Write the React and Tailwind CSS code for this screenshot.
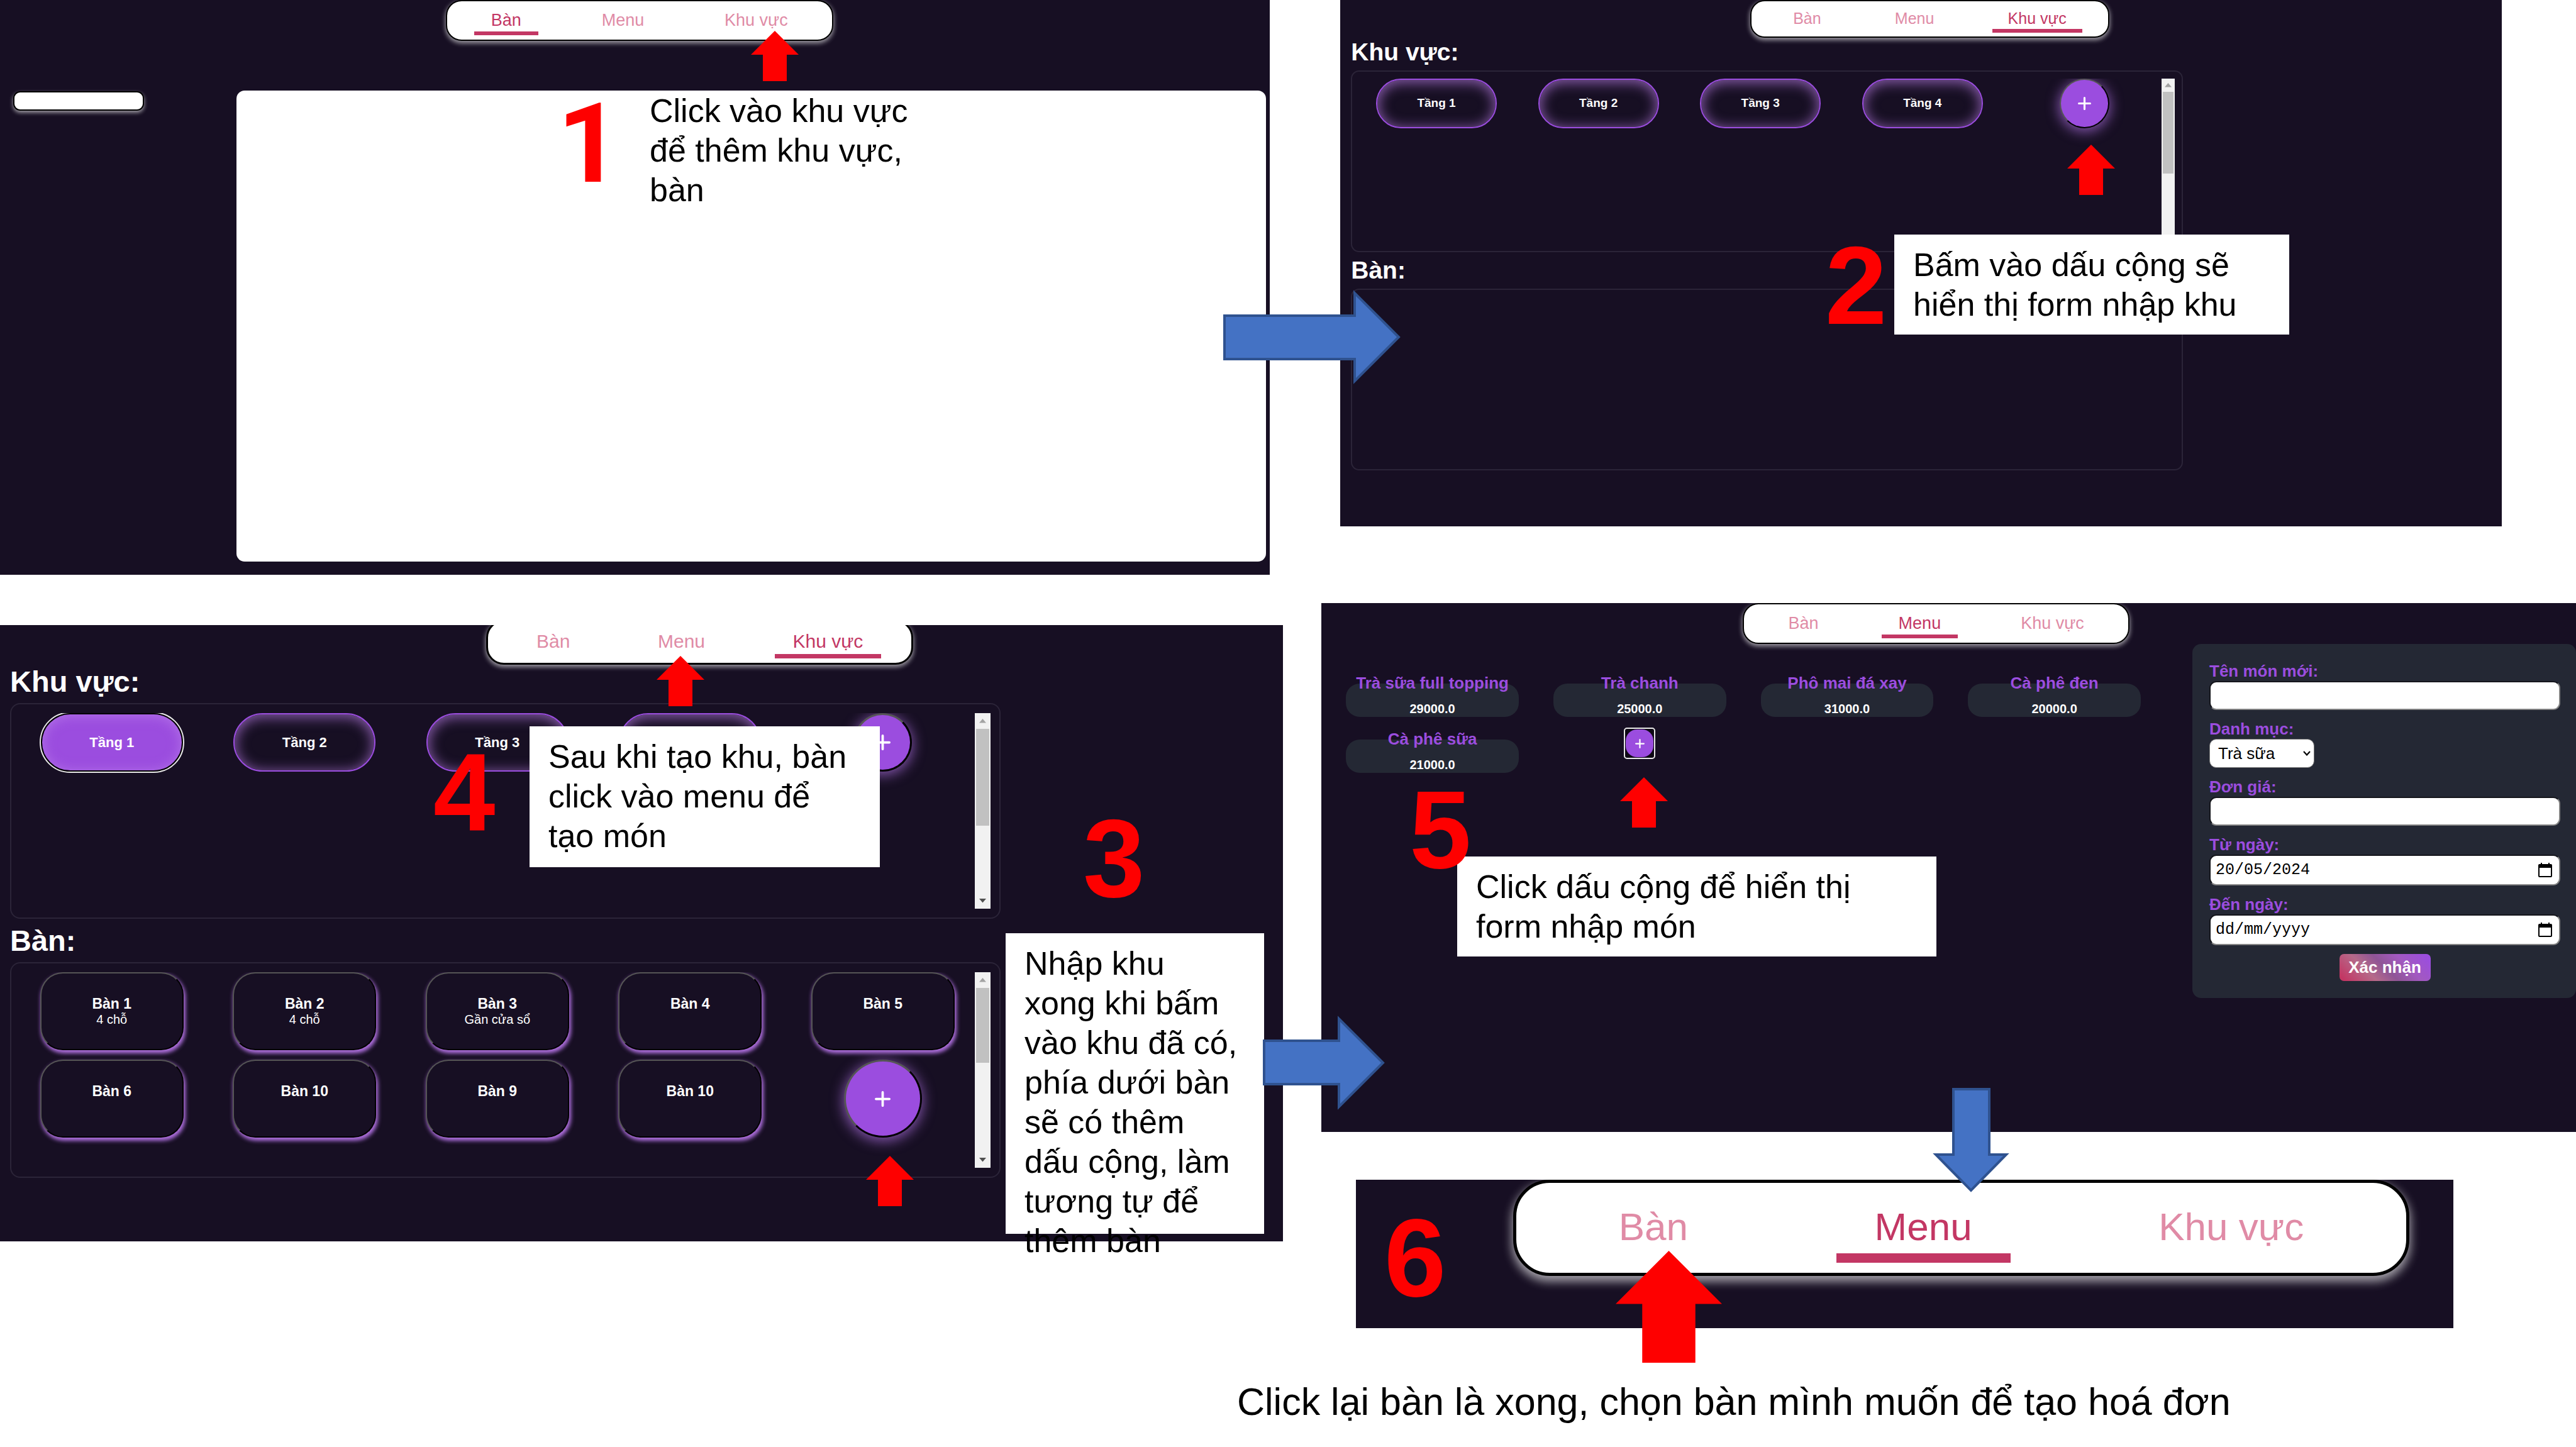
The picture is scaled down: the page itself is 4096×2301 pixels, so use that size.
import React from "react";

const TABS = ["Bàn", "Menu", "Khu vực"];

const NAV_SIZES = {
  sm: {
    bar: "h-[60px] rounded-[23px] border-[2px] px-[41px] pb-[6px] shadow-[0_3px_7px_1px_rgba(255,255,255,0.55)]",
    item: "text-[25px] leading-[30px] px-[25px] pb-[2px] border-b-[6px]",
  },
  md: {
    bar: "h-[65px] rounded-[25px] border-[2px] px-[43px] pb-[7px] shadow-[0_3px_7px_1px_rgba(255,255,255,0.55)]",
    item: "text-[27px] leading-[32px] px-[27px] pb-[2px] border-b-[6px]",
  },
  lg: {
    bar: "-mt-2 h-[71px] rounded-[28px] border-[3px] px-[48px] pb-[7px] shadow-[0_3px_7px_1px_rgba(255,255,255,0.55)]",
    item: "text-[30px] leading-[36px] px-[29px] pb-[2px] border-b-[7px]",
  },
  xl: {
    bar: "h-[153px] rounded-[58px] border-[5px] px-[102px] pb-[16px] shadow-[0_7px_15px_2px_rgba(255,255,255,0.6)]",
    item: "text-[62px] leading-[72px] px-[61px] pb-[6px] border-b-[15px]",
  },
};

function TabBar({ size, active, width }) {
  const s = NAV_SIZES[size];
  return (
    <nav className={`flex items-end justify-between border-black bg-white ${s.bar} ${width}`}>
      {TABS.map((tab) => (
        <button
          key={tab}
          type="button"
          className={`whitespace-nowrap ${s.item} ${
            tab === active ? "border-[#c33764] text-[#c33764]" : "border-transparent text-[#e08ba6]"
          }`}
        >
          {tab}
        </button>
      ))}
    </nav>
  );
}

function Plus({ className }) {
  return (
    <svg viewBox="0 0 20 20" className={className} fill="none" stroke="white" strokeWidth="3" strokeLinecap="round">
      <path d="M10 1.5V18.5M1.5 10H18.5" />
    </svg>
  );
}

function ScrollBar({ size, thumb }) {
  const lg = size === "lg";
  return (
    <div className={`flex shrink-0 flex-col items-center bg-[#f1f1f1] ${lg ? "w-[25px]" : "w-[21px]"}`}>
      <div className={`flex items-center justify-center ${lg ? "h-[25px]" : "h-[21px]"}`}>
        <svg viewBox="0 0 12 7" className="w-[11px]" fill="#a3a3a3">
          <path d="M0 7L6 0L12 7Z" />
        </svg>
      </div>
      <div className={`bg-[#c1c1c1] ${lg ? "w-[21px]" : "w-[17px]"} ${thumb}`} />
      <div className={`mt-auto flex items-center justify-center ${lg ? "h-[25px]" : "h-[21px]"}`}>
        <svg viewBox="0 0 12 7" className="w-[11px]" fill="#505050">
          <path d="M0 0L6 7L12 0Z" />
        </svg>
      </div>
    </div>
  );
}

const BEVEL = "border-t-[#555] border-l-[#555] border-r-black border-b-black";

const GROUP_SIZES = {
  sm: {
    title: "text-[39px] leading-[58px]",
    box: "h-[289px] rounded-[13px] border-[2px] p-[11px]",
    grid: "gap-x-[12px] gap-y-[12px]",
    area: "h-[79px] w-[192px] rounded-[40px] border-[2px] text-[19px]",
    round: "size-[79px] border-[2px]",
    plus: "size-[21px]",
  },
  lg: {
    title: "text-[47px] leading-[69px]",
    box: "h-[343px] rounded-[16px] border-[2px] p-[14px]",
    grid: "gap-x-[15px] gap-y-[15px]",
    area: "h-[93px] w-[226px] rounded-[47px] border-[2px] text-[22px]",
    round: "size-[93px] border-[3px]",
    plus: "size-[25px]",
  },
};

function Group({ title, size, width, thumb, children }) {
  const s = GROUP_SIZES[size];
  return (
    <section className={width}>
      <h2 className={`font-bold text-white ${s.title}`}>{title}</h2>
      <div className={`flex border-[#2b2438] ${s.box}`}>
        {children && (
          <>
            <div className={`grid flex-1 grid-cols-5 content-start justify-items-center overflow-hidden ${s.grid}`}>
              {children}
            </div>
            <ScrollBar size={size} thumb={thumb} />
          </>
        )}
      </div>
    </section>
  );
}

function AreaButton({ size, selected, children }) {
  return (
    <button
      type="button"
      className={`font-bold text-white ${GROUP_SIZES[size].area} ${
        selected
          ? "border-black bg-[#9b4ddf] shadow-[inset_0_2px_20px_rgba(190,130,235,0.7)] outline-2 outline-[#e8e8e8]"
          : "border-[#9b4ddf] shadow-[inset_0_3px_20px_2px_rgba(170,115,210,0.75)]"
      }`}
    >
      {children}
    </button>
  );
}

function AddButton({ size, round }) {
  const s = GROUP_SIZES[size];
  return (
    <button
      type="button"
      aria-label="Thêm"
      className={`flex items-center justify-center rounded-full bg-[#9b4ddf] shadow-[0_4px_20px_2px_rgba(170,110,220,0.7)] ${BEVEL} ${
        round || s.round
      }`}
    >
      <Plus className={s.plus} />
    </button>
  );
}

function TableButton({ name, note }) {
  return (
    <button
      type="button"
      className={`flex h-[124px] w-[228px] flex-col items-center justify-center rounded-[36px] border-[2px] bg-[#170f23] text-white shadow-[2px_4px_6px_1px_#b070e0] ${BEVEL}`}
    >
      <span className="text-[23px] leading-[26px] font-bold">{name}</span>
      <span className="h-[24px] text-[20px] leading-[24px]">{note}</span>
    </button>
  );
}

function Dish({ name, price }) {
  return (
    <li className="flex h-[53px] flex-col items-center rounded-[22px] bg-[#242834]">
      <span className="-mt-4 text-[26px] leading-[30px] font-bold whitespace-nowrap text-[#9b4ddf]">{name}</span>
      <span className="mt-[14px] text-[20px] leading-[24px] font-bold text-white">{price}</span>
    </li>
  );
}

const FIELD =
  "rounded-[11px] border-[2px] border-t-[#15161c] border-l-[#15161c] border-r-[#858585] border-b-[#858585] bg-white px-[8px] text-black";

function Label({ htmlFor, children }) {
  return (
    <label htmlFor={htmlFor} className="mt-[14px] text-[26px] leading-[32px] font-bold text-[#9b4ddf]">
      {children}
    </label>
  );
}

function DateField({ id, value }) {
  return (
    <div className={`flex h-[49px] items-center justify-between pr-[11px] ${FIELD}`}>
      <input
        id={id}
        type="text"
        defaultValue={value}
        placeholder="dd/mm/yyyy"
        className="min-w-0 flex-1 font-['Liberation_Mono',monospace] text-[25px] outline-none placeholder:text-black"
      />
      <button type="button" aria-label="Chọn ngày">
        <svg viewBox="0 0 22 24" className="h-[24px] w-[22px]">
          <path
            fill="black"
            fillRule="evenodd"
            d="M4 0H6V2H16V0H18V2H20Q22 2 22 4V21Q22 23 20 23H2Q0 23 0 21V4Q0 2 2 2H4ZM2 8V21H20V8Z"
          />
        </svg>
      </button>
    </div>
  );
}

function DishForm() {
  return (
    <form className="flex w-[610px] shrink-0 flex-col rounded-[14px] bg-[#242834] pt-[13px] pr-[25px] pb-[27px] pl-[27px]">
      <Label htmlFor="dish-name">Tên món mới:</Label>
      <input id="dish-name" type="text" className={`h-[46px] ${FIELD}`} />
      <Label htmlFor="dish-kind">Danh mục:</Label>
      <div className="grid w-[167px] items-center">
        <select
          id="dish-kind"
          className="col-start-1 row-start-1 h-[46px] w-full appearance-none rounded-[11px] border border-[#767676] bg-white pl-[13px] text-[26px] text-black"
        >
          <option>Trà sữa</option>
        </select>
        <svg
          viewBox="0 0 12 8"
          className="pointer-events-none col-start-1 row-start-1 mr-[6px] w-[12px] justify-self-end"
          fill="none"
          stroke="black"
          strokeWidth="2.2"
        >
          <path d="M1 1L6 6.5L11 1" />
        </svg>
      </div>
      <Label htmlFor="dish-price">Đơn giá:</Label>
      <input id="dish-price" type="text" className={`h-[46px] ${FIELD}`} />
      <Label htmlFor="date-from">Từ ngày:</Label>
      <DateField id="date-from" value="20/05/2024" />
      <Label htmlFor="date-to">Đến ngày:</Label>
      <DateField id="date-to" value="" />
      <button
        type="submit"
        className="mt-[14px] h-[43px] w-[145px] self-center rounded-[7px] bg-[linear-gradient(45deg,#c33764_5%,#b56a8a_32%,#8f5596_50%,#a259c0_70%,#9b4ddf_95%)] text-[26px] leading-[43px] font-bold whitespace-nowrap text-white"
      >
        Xác nhận
      </button>
    </form>
  );
}

/* Annotations: free-standing marks laid over the panels. */

function Step({ place, children }) {
  return <span className={`absolute leading-none font-bold text-[#fe0000] ${place}`}>{children}</span>;
}

function Note({ place, lines }) {
  return (
    <p className={`absolute px-[30px] pt-[17px] text-[52px] leading-[63px] whitespace-nowrap text-black ${place}`}>
      {lines.map((line) => (
        <span key={line} className="block">
          {line}
        </span>
      ))}
    </p>
  );
}

function RedArrow({ place }) {
  return (
    <svg viewBox="0 0 76 80" className={`absolute ${place}`} fill="#fe0000">
      <path d="M38 0L76 38H57V80H19V38H0Z" />
    </svg>
  );
}

function BlueArrow({ place, box, d }) {
  return (
    <svg viewBox={box} className={`absolute ${place}`} fill="#4472c4" stroke="#2f528f" strokeWidth="4">
      <path d={d} />
    </svg>
  );
}

const AREAS = ["Tầng 1", "Tầng 2", "Tầng 3", "Tầng 4"];

const TABLES = [
  ["Bàn 1", "4 chỗ"],
  ["Bàn 2", "4 chỗ"],
  ["Bàn 3", "Gần cửa sổ"],
  ["Bàn 4", ""],
  ["Bàn 5", ""],
  ["Bàn 6", ""],
  ["Bàn 10", ""],
  ["Bàn 9", ""],
  ["Bàn 10", ""],
];

const DISHES = [
  ["Trà sữa full topping", "29000.0"],
  ["Trà chanh", "25000.0"],
  ["Phô mai đá xay", "31000.0"],
  ["Cà phê đen", "20000.0"],
  ["Cà phê sữa", "21000.0"],
];

const PANEL = "overflow-hidden bg-[#170f23]";

export default function App() {
  return (
    <main className="relative flex min-h-screen items-start justify-between overflow-hidden bg-white font-['Liberation_Sans',Arial,sans-serif]">
      <div className="flex w-[49.8%] flex-col gap-[80px]">
        <section className={`${PANEL} w-[99%] pb-[21px]`}>
          <TabBar size="md" active="Bàn" width="ml-[35.1%] w-[30.5%]" />
          <div className="mt-[79px] flex items-start justify-between pr-[6px] pl-[21px]">
            <input
              type="text"
              aria-label="Tìm kiếm"
              className="mt-[1px] h-[31px] w-[208px] rounded-[11px] border-[2px] border-black bg-white shadow-[0_3px_6px_rgba(255,255,255,0.6)]"
            />
            <div className="h-[749px] w-[82.2%] rounded-[13px] bg-white" />
          </div>
        </section>

        <section className={`${PANEL} pb-[101px]`}>
          <TabBar size="lg" active="Khu vực" width="ml-[37.9%] w-[33.3%]" />
          <div className="pl-[16px]">
            <div className="-mt-2">
              <Group title="Khu vực:" size="lg" width="w-[77.8%]" thumb="h-[154px]">
                {AREAS.map((area, i) => (
                  <AreaButton key={area} size="lg" selected={i === 0}>
                    {area}
                  </AreaButton>
                ))}
                <AddButton size="lg" />
              </Group>
            </div>
            <Group title="Bàn:" size="lg" width="w-[77.8%]" thumb="h-[119px]">
              {TABLES.map(([name, note], i) => (
                <TableButton key={i} name={name} note={note} />
              ))}
              <AddButton size="lg" round="size-[124px] border-[3px]" />
            </Group>
          </div>
        </section>
      </div>

      <div className="flex w-[48.7%] flex-col">
        <section className={`${PANEL} mr-[118px] ml-[30px] h-[837px]`}>
          <TabBar size="sm" active="Khu vực" width="ml-[35.3%] w-[30.9%]" />
          <div className="-mt-[6px] pl-[17px]">
            <Group title="Khu vực:" size="sm" width="w-[72.3%]" thumb="h-[130px]">
              {AREAS.map((area) => (
                <AreaButton key={area} size="sm">
                  {area}
                </AreaButton>
              ))}
              <AddButton size="sm" />
            </Group>
            <Group title="Bàn:" size="sm" width="w-[72.3%]" />
          </div>
        </section>

        <section className={`${PANEL} mt-[122px] pb-[213px]`}>
          <TabBar size="md" active="Menu" width="ml-[33.6%] w-[30.8%]" />
          <div className="flex items-start gap-[82px] pl-[39px]">
            <ul className="mt-[63px] grid flex-1 grid-cols-4 gap-x-[55px] gap-y-[36px]">
              {DISHES.map(([name, price]) => (
                <Dish key={name} name={name} price={price} />
              ))}
              <li className="-mt-[19px] flex h-[50px] justify-center">
                <button
                  type="button"
                  aria-label="Thêm món"
                  className="flex size-[50px] items-center justify-center rounded-[5px] border-[2px] border-[#e8e8e8] bg-[#0d0814]"
                >
                  <span className="flex size-[44px] items-center justify-center rounded-[18px] bg-[#9b4ddf]">
                    <Plus className="size-[15px]" />
                  </span>
                </button>
              </li>
            </ul>
            <DishForm />
          </div>
        </section>

        <section className={`${PANEL} mt-[76px] mr-[195px] ml-[55px] pb-[83px]`}>
          <TabBar size="xl" active="Menu" width="ml-[14.3%] w-[81.7%]" />
        </section>
      </div>

      <RedArrow place="left-[1194px] top-[49px] w-[76px]" />
      <Step place="left-[886px] top-[140px] font-[Roboto,sans-serif] text-[177px]">1</Step>
      <Note place="left-[1003px] top-[128px]" lines={["Click vào khu vực", "để thêm khu vực,", "bàn"]} />

      <RedArrow place="left-[3287px] top-[230px] w-[76px]" />
      <Step place="left-[2902px] top-[366px] text-[177px]">2</Step>
      <Note
        place="left-[3012px] top-[373px] h-[159px] w-[628px] bg-white"
        lines={["Bấm vào dấu cộng sẽ", "hiển thị form nhập khu"]}
      />

      <RedArrow place="left-[1044px] top-[1043px] w-[76px]" />
      <Note
        place="left-[842px] top-[1155px] h-[224px] w-[557px] bg-white"
        lines={["Sau khi tạo khu, bàn", "click vào menu để", "tạo món"]}
      />
      <Step place="left-[689px] top-[1172px] text-[177px]">4</Step>

      <Step place="left-[1722px] top-[1277px] text-[177px]">3</Step>
      <RedArrow place="left-[1377px] top-[1838px] w-[76px]" />
      <Note
        place="left-[1599px] top-[1484px] h-[478px] w-[411px] bg-white"
        lines={[
          "Nhập khu",
          "xong khi bấm",
          "vào khu đã có,",
          "phía dưới bàn",
          "sẽ có thêm",
          "dấu cộng, làm",
          "tương tự để",
          "thêm bàn",
        ]}
      />

      <RedArrow place="left-[2576px] top-[1236px] w-[76px]" />
      <Note
        place="left-[2317px] top-[1362px] h-[159px] w-[762px] bg-white"
        lines={["Click dấu cộng để hiển thị", "form nhập món"]}
      />
      <Step place="left-[2241px] top-[1231px] text-[177px]">5</Step>

      <BlueArrow
        place="left-[1945px] top-[461px] w-[282px]"
        box="0 0 282 150"
        d="M2 41H209V5L279 75L209 145V110H2Z"
      />
      <BlueArrow
        place="left-[2008px] top-[1615px] w-[194px]"
        box="0 0 194 150"
        d="M2 40H121V5L191 75L121 145V109H2Z"
      />
      <BlueArrow
        place="left-[3073px] top-[1730px] w-[122px]"
        box="0 0 122 166"
        d="M33 2H90V106H117L61 163L5 106H33Z"
      />

      <Step place="left-[2201px] top-[1912px] text-[177px]">6</Step>
      <RedArrow place="left-[2569px] top-[1989px] w-[169px]" />
      <p className="absolute top-[2194px] left-[1967px] text-[61px] leading-[70px] whitespace-nowrap text-black">
        Click lại bàn là xong, chọn bàn mình muốn để tạo hoá đơn
      </p>
    </main>
  );
}
